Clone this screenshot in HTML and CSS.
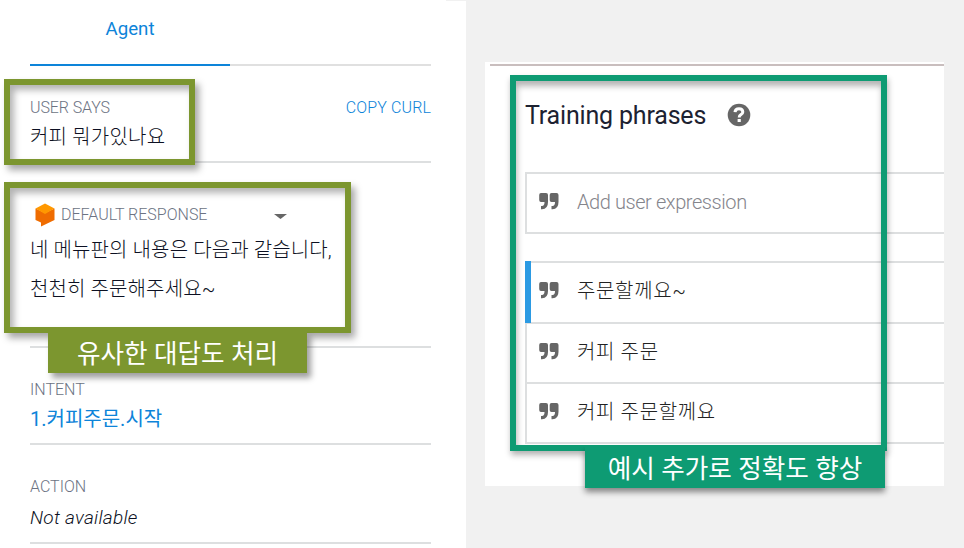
FILE: index.html
```html
<!DOCTYPE html>
<html lang="ko">
<head>
<meta charset="utf-8">
<title>Agent</title>
<link rel="stylesheet" href="styles.css">
</head>
<body>
<svg class="defs" width="0" height="0">
  <symbol id="quote" viewBox="0 0 20 17"><path d="M2 0h5q2 0 2 2v7q0 7-6 7.200H2v-3.200h1q2.400-.3 2.500-3.500V9H2Q.2 9 .2 7V2Q.2 0 2 0zM12.500 0h5q2 0 2 2v7q0 7-6 7.200h-1v-3.200h1q2.400-.3 2.500-3.500V9h-3.500q-1.800 0-1.800-2V2q0-2 1.800-2z"/></symbol>
</svg>
<main class="stage">
  <section class="agent">
    <nav class="tabs"><span class="tab">Agent</span></nav>
    <div class="block says">
      <div class="head"><span class="label user">USER SAYS</span><span class="copy">COPY CURL</span></div>
      <p class="text">커피 뭐가있나요</p>
    </div>
    <div class="block response">
      <div class="head">
        <svg class="cube" width="20" height="24" viewBox="0 0 20 24"><path fill="#ef6c00" d="M.5 5.500L10 10l9.500-4.500v11.500L6 23.500V19.500L.5 17z"/><path fill="#ff9800" d="M10 .5l9.500 5L10 11 .5 5.500z"/></svg>
        <span class="label default">DEFAULT RESPONSE</span>
        <svg class="caret" width="14" height="6" viewBox="0 0 14 6"><path fill="#666" d="M0 0h13L6.500 5z"/></svg>
      </div>
      <p class="text first">네 메뉴판의 내용은 다음과 같습니다,</p>
      <p class="text">천천히 주문해주세요~</p>
    </div>
    <div class="block intent">
      <span class="label">INTENT</span>
      <p class="text link">1.커피주문.시작</p>
    </div>
    <div class="block action">
      <span class="label">ACTION</span>
      <p class="text none">Not available</p>
    </div>
  </section>
  <section class="training">
    <h1 class="title"><span>Training phrases</span><svg width="24" height="24" viewBox="0 0 24 24"><circle cx="12" cy="12" r="11.300" fill="#666"/><path d="M8 9.200Q8.200 5.800 12 5.800T15.800 9Q15.800 10.700 13.900 11.700Q12.200 12.600 12.200 14.500" fill="none" stroke="#fff" stroke-width="3"/><path fill="#fff" d="M10.600 16h3.200v3h-3.200z"/></svg></h1>
    <div class="row input"><svg class="quote"><use href="#quote"/></svg><span class="hint">Add user expression</span></div>
    <div class="list">
      <div class="row active"><svg class="quote"><use href="#quote"/></svg><span>주문할께요~</span></div>
      <div class="row"><svg class="quote"><use href="#quote"/></svg><span>커피 주문</span></div>
      <div class="row"><svg class="quote"><use href="#quote"/></svg><span>커피 주문할께요</span></div>
    </div>
  </section>
  <div class="frame olive frame-says"></div>
  <div class="frame olive frame-response"></div>
  <div class="callout olive callout-response">유사한 대답도 처리</div>
  <div class="frame green frame-training"></div>
  <div class="callout green callout-training">예시 추가로 정확도 향상</div>
</main>
</body>
</html>
```
FILE: styles.css
```css
* { box-sizing: border-box; }
body { margin: 0; background: #f1f1f1; font-family: Roboto, "Noto Sans CJK KR", sans-serif; }
p, h1 { margin: 0; }
.defs { position: absolute; }
.stage { position: relative; display: flex; align-items: flex-start; gap: 19px; width: 964px; height: 548px; overflow: hidden; }

.agent { width: 466px; height: 548px; padding: 0 35px 0 30px; background: linear-gradient(#f1f1f1, #f1f1f1) right top / 20px 1px no-repeat #fff; }
.tabs { height: 66px; border-bottom: 2px solid #e0e0e0; }
.tab { display: block; width: 200px; height: 66px; padding-top: 17px; border-bottom: 2px solid #0d84d9; color: #0d84d9; font-size: 18.700px; line-height: 24px; text-align: center; }
.block { border-bottom: 2px solid #dddfe0; white-space: nowrap; }
.says { height: 97px; padding-top: 32px; }
.response { height: 185px; padding-top: 40px; }
.intent { height: 97px; padding-top: 32px; }
.action { height: 99px; padding-top: 32px; }
.head { display: flex; }
.label, .copy { display: block; height: 20px; font-size: 16px; line-height: 20px; font-weight: 300; color: #6c7383; }
.user { letter-spacing: -.1px; }
.copy { margin-left: auto; color: #0d84d9; letter-spacing: .12px; }
.cube { margin: 0 6px 0 5px; }
.response .head { height: 24px; }
.response .label { width: 213px; margin-top: 2px; }
.caret { margin-top: 11px; }
.text { font-size: 20px; line-height: 36px; height: 36px; color: #0c1022; font-weight: 300; letter-spacing: .12px; }
.says .text { padding-top: 1px; letter-spacing: .2px; }
.first { height: 39px; }
.response .text { position: relative; top: 5px; }
.link { color: #0d84d9; font-weight: 400; letter-spacing: 0; padding-top: 1px; }
.none { font-size: 19px; font-style: italic; line-height: 42px; letter-spacing: .25px; }

.training { width: 459px; height: 424px; margin-top: 62px; padding-left: 40px; background: linear-gradient(#c9bebe, #c9bebe) 5px 2px / 454px 2px no-repeat #fff; }
.title { display: flex; align-items: center; gap: 21px; height: 110px; padding-bottom: 4px; color: #1d2231; font-size: 25px; font-weight: 400; letter-spacing: -.18px; }
.row { display: flex; align-items: center; gap: 18px; height: 60px; padding-left: 12px; border-left: 2px solid #dddfe0; border-bottom: 2px solid #dddfe0; color: #222; font-size: 20px; font-weight: 300; white-space: nowrap; letter-spacing: .65px; }
.row span { padding-bottom: 5px; }
.row .quote { position: relative; top: -2px; }
.input { height: 62px; border-top: 2px solid #dddfe0; }
.row .hint { color: #85858c; letter-spacing: -.42px; padding-bottom: 3px; }
.list { margin-top: 27px; border-top: 2px solid #dddfe0; }
.active { position: relative; margin-top: -2px; height: 63px; padding: 1px 0 0 8px; border-left: 0; padding-left: 14px; }
.active::before { content: ""; position: absolute; left: 0; top: 0; width: 6px; height: 62px; background: #2b9ae3; }
.quote { width: 20px; height: 17px; fill: #666; }

.frame { position: absolute; border: 6px solid; box-shadow: 4px 5px 7px rgba(0,0,0,.35), inset 4px 5px 7px rgba(0,0,0,.3); }
.frame.olive { border-color: #7c962f; }
.frame.green { border-color: #0e9b73; }
.frame-says { left: 4px; top: 79px; width: 191px; height: 86px; }
.frame-response { left: 4px; top: 182px; width: 347px; height: 151px; }
.frame-training { left: 510px; top: 75px; width: 377px; height: 376px; box-shadow: 1px 4px 6px rgba(0,0,0,.3), inset 1px 5px 6px rgba(0,0,0,.3); }
.callout { position: absolute; color: #fff; font-size: 25.600px; text-align: center; white-space: nowrap; box-shadow: 4px 5px 6px rgba(0,0,0,.38); clip-path: inset(0 -20px -20px -20px); }
.callout.olive { background: #7c962f; }
.callout.green { background: #0e9b73; }
.callout-response { left: 48px; top: 332px; width: 259px; height: 41px; line-height: 44px; }
.callout-training { left: 585px; top: 447px; width: 300px; height: 41px; line-height: 44px; box-shadow: 0 4px 6px rgba(0,0,0,.45); }
```
